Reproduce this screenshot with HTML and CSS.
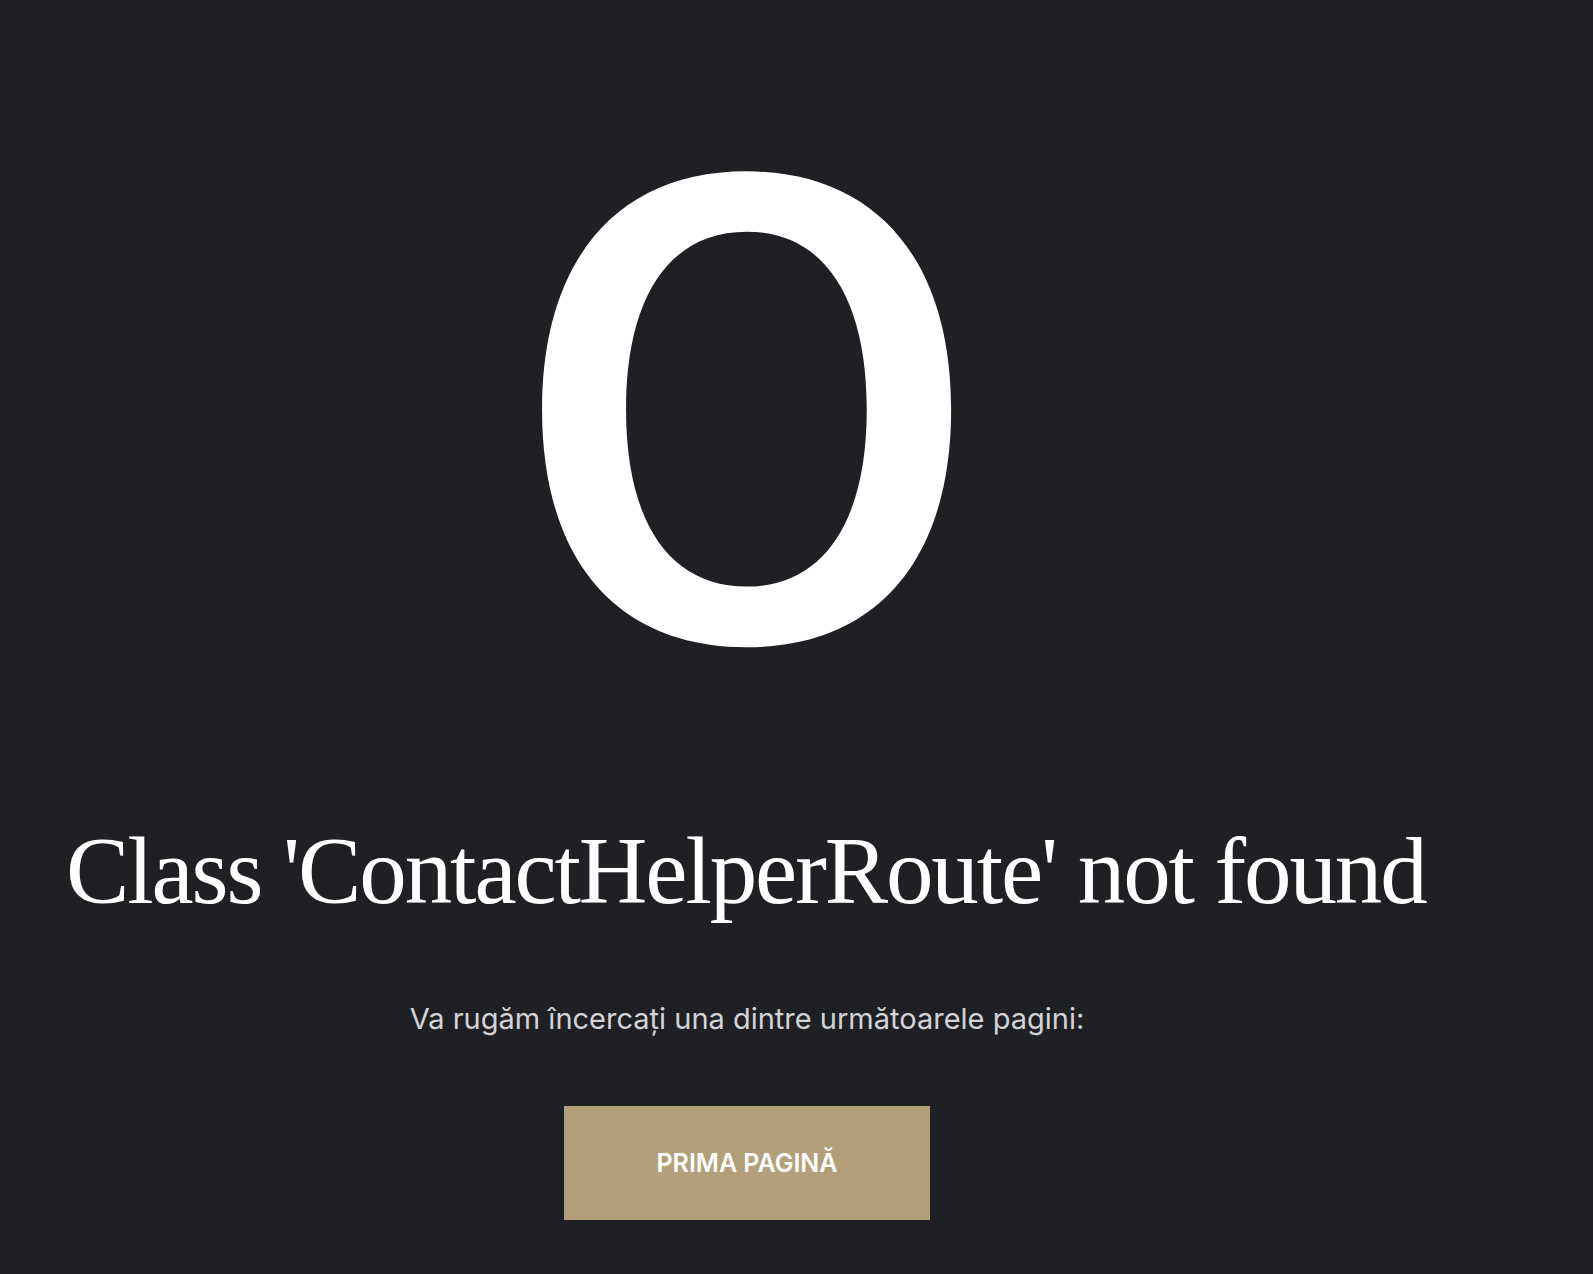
FILE: index.html
```html
<!DOCTYPE html>
<html>
<head>
  <title>Eroare</title>
  <link rel="stylesheet" href="styles.css">
</head>
<body>
  <div class="error-page">
    <div class="error-code">0</div>
    <h1 class="error-title">Class 'ContactHelperRoute' not found</h1>
    <p class="error-text">Va rugăm încercați una dintre următoarele pagini:</p>
    <div class="error-actions">
      <a class="home-button" href="#">Prima pagină</a>
    </div>
  </div>
</body>
</html>
```

FILE: styles.css
```css
body {
  margin: 0;
  background-color: #1f2024;
  color: #fff;
  font-family: "Inter", "Liberation Sans", sans-serif;
}

.error-page {
  width: 1494px;
  padding-top: 60px;
  padding-bottom: 45px;
  display: flex;
  flex-direction: column;
  align-items: center;
}

/* big status number */
.error-code {
  font-size: 637px;
  font-weight: 500;
  line-height: 700px;
  height: 700px;
  transform: scaleX(1.2);
}

.error-title {
  align-self: flex-start;
  margin: 51px 0 0;
  padding-left: 66px;
  font-family: "Liberation Serif", serif;
  font-weight: 400;
  font-size: 95px;
  line-height: 120px;
  letter-spacing: -2.1px;
}

.error-text {
  margin: 70px 0 0;
  font-size: 29px;
  color: #d4d4d6;
}

.error-actions {
  margin-top: 70px;
}

.home-button {
  display: flex;
  align-items: center;
  justify-content: center;
  width: 366px;
  height: 114px;
  background-color: #b39f7a;
  color: #fff;
  font-size: 25px;
  font-weight: 600;
  text-transform: uppercase;
  text-decoration: none;
}
```
